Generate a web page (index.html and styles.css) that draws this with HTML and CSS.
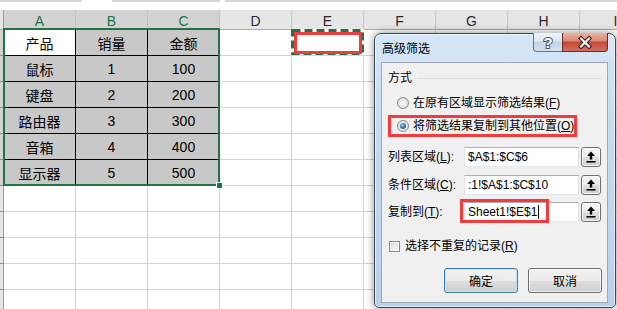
FILE: index.html
```html
<!DOCTYPE html>
<html lang="zh">
<head>
<meta charset="utf-8">
<title>高级筛选</title>
<link rel="stylesheet" href="styles.css">
</head>
<body>
<div class="app">
  <div class="topbar"><span class="seg s1"></span><span class="gap g1"></span><span class="seg s2"></span><span class="gap g2"></span><span class="seg s3"></span></div>
  <div class="sheet">
    <div class="corner"></div>
    <div class="ch sel">A</div><div class="ch sel">B</div><div class="ch sel">C</div><div class="ch">D</div><div class="ch">E</div><div class="ch">F</div><div class="ch">G</div><div class="ch">H</div><div class="ch">I</div>

    <div class="rh sel"></div>
    <div class="c t w">产品</div><div class="c t">销量</div><div class="c t">金额</div><div class="c"></div><div class="c"></div><div class="c"></div><div class="c"></div><div class="c"></div><div class="c"></div>

    <div class="rh sel"></div>
    <div class="c t">鼠标</div><div class="c t">1</div><div class="c t">100</div><div class="c"></div><div class="c"></div><div class="c"></div><div class="c"></div><div class="c"></div><div class="c"></div>

    <div class="rh sel"></div>
    <div class="c t">键盘</div><div class="c t">2</div><div class="c t">200</div><div class="c"></div><div class="c"></div><div class="c"></div><div class="c"></div><div class="c"></div><div class="c"></div>

    <div class="rh sel"></div>
    <div class="c t">路由器</div><div class="c t">3</div><div class="c t">300</div><div class="c"></div><div class="c"></div><div class="c"></div><div class="c"></div><div class="c"></div><div class="c"></div>

    <div class="rh sel"></div>
    <div class="c t">音箱</div><div class="c t">4</div><div class="c t">400</div><div class="c"></div><div class="c"></div><div class="c"></div><div class="c"></div><div class="c"></div><div class="c"></div>

    <div class="rh sel"></div>
    <div class="c t">显示器</div><div class="c t">5</div><div class="c t">500</div><div class="c"></div><div class="c"></div><div class="c"></div><div class="c"></div><div class="c"></div><div class="c"></div>

    <div class="rh"></div>
    <div class="c"></div><div class="c"></div><div class="c"></div><div class="c"></div><div class="c"></div><div class="c"></div><div class="c"></div><div class="c"></div><div class="c"></div>
    <div class="rh"></div>
    <div class="c"></div><div class="c"></div><div class="c"></div><div class="c"></div><div class="c"></div><div class="c"></div><div class="c"></div><div class="c"></div><div class="c"></div>
    <div class="rh"></div>
    <div class="c"></div><div class="c"></div><div class="c"></div><div class="c"></div><div class="c"></div><div class="c"></div><div class="c"></div><div class="c"></div><div class="c"></div>
    <div class="rh"></div>
    <div class="c"></div><div class="c"></div><div class="c"></div><div class="c"></div><div class="c"></div><div class="c"></div><div class="c"></div><div class="c"></div><div class="c"></div>
    <div class="rh"></div>
    <div class="c"></div><div class="c"></div><div class="c"></div><div class="c"></div><div class="c"></div><div class="c"></div><div class="c"></div><div class="c"></div><div class="c"></div>
  </div>

  <div class="selection"><span class="handle"></span></div>
  <svg class="ants" width="73" height="26" viewBox="0 0 73 26"><rect x="1.5" y="1.5" width="70" height="23" fill="none" stroke="#fff" stroke-width="3"/><rect x="1.5" y="1.5" width="70" height="23" fill="none" stroke="#217346" stroke-width="3" stroke-dasharray="8 4"/></svg>
  <div class="redbox"></div>

  <div class="dialog">
    <div class="titlebar">
      <span class="title">高级筛选</span>
      <div class="capbtns">
        <span class="cb help">?</span>
        <span class="cb close"><svg width="44" height="17" viewBox="0 0 44 17"><path d="M18 4.5 L26 12.5 M26 4.5 L18 12.5" stroke="#3d1712" stroke-width="4.2" stroke-linecap="square"/><path d="M18 4.5 L26 12.5 M26 4.5 L18 12.5" stroke="#fff" stroke-width="2.2" stroke-linecap="square"/></svg></span>
      </div>
    </div>
    <div class="panel">
      <div class="section"><span>方式</span><span class="rule"></span></div>
      <div class="opt first"><span class="radio"></span><span>在原有区域显示筛选结果(<u>F</u>)</span></div>
      <div class="optbox"><div class="opt"><span class="radio on"></span><span>将筛选结果复制到其他位置(<u>O</u>)</span></div></div>
      <div class="field f1"><span class="lbl">列表区域(<u>L</u>):</span><div class="input">$A$1:$C$6</div><span class="pick"><svg width="10" height="12" viewBox="0 0 10 12"><path d="M5 0.5 L9 5 L6.2 5 L6.2 8.5 L3.8 8.5 L3.8 5 L1 5 Z" fill="#000"/><rect x="0.5" y="10" width="9" height="1.6" fill="#000"/></svg></span></div>
      <div class="field f2"><span class="lbl">条件区域(<u>C</u>):</span><div class="input">:1!$A$1:$C$10</div><span class="pick"><svg width="10" height="12" viewBox="0 0 10 12"><path d="M5 0.5 L9 5 L6.2 5 L6.2 8.5 L3.8 8.5 L3.8 5 L1 5 Z" fill="#000"/><rect x="0.5" y="10" width="9" height="1.6" fill="#000"/></svg></span></div>
      <div class="field f3"><span class="lbl">复制到(<u>T</u>):</span><div class="input">Sheet1!$E$1<span class="caret"></span><span class="inmark"></span></div><span class="pick"><svg width="10" height="12" viewBox="0 0 10 12"><path d="M5 0.5 L9 5 L6.2 5 L6.2 8.5 L3.8 8.5 L3.8 5 L1 5 Z" fill="#000"/><rect x="0.5" y="10" width="9" height="1.6" fill="#000"/></svg></span></div>
      <div class="check"><span class="box"></span><span>选择不重复的记录(<u>R</u>)</span></div>
      <div class="buttons"><span class="btn default">确定</span><span class="btn">取消</span></div>
    </div>
  </div>
</div>
</body>
</html>
```

FILE: styles.css
```css
* { box-sizing: border-box; }
html, body { margin: 0; padding: 0; }
body {
  width: 617px; height: 309px; overflow: hidden; background: #fff;
  font-family: "Liberation Sans", "Noto Sans CJK SC", sans-serif;
}
.app { position: relative; width: 617px; height: 309px; overflow: hidden; }

.topbar { height: 10px; display: flex; align-items: flex-start; background: #fff; }
.topbar .seg { height: 2px; background: #d6d6d6; }
.s1 { width: 82px; }
.g1 { width: 30px; }
.s2 { width: 108px; }
.g2 { width: 5px; }
.s3 { flex: 1; }

.sheet {
  display: grid;
  grid-template-columns: 4px repeat(9, 72px);
  grid-template-rows: 20px repeat(11, 26px);
}
.corner { background: #e6e6e6; border-right: 1px solid #9e9e9e; border-bottom: 1px solid #ababab; }
.ch {
  background: #e6e6e6; border-right: 1px solid #c3c3c3; border-bottom: 1px solid #ababab;
  display: flex; align-items: center; justify-content: center;
  font-size: 14px; color: #2b2b2b; padding-top: 3px;
}
.ch.sel { background: #d3d3d3; color: #217346; }
.rh { background: #e6e6e6; border-right: 1px solid #9e9e9e; border-bottom: 1px solid #8c8c8c; }
.rh.sel { background: #d3d3d3; }
.c {
  border-right: 1px solid #d4d4d4; border-bottom: 1px solid #d4d4d4;
  display: flex; align-items: center; justify-content: center;
  font-size: 14px; color: #000; padding-top: 1px;
}
.c.t { background: #c8c8c8; border-right-color: #000; border-bottom-color: #000; }
.c.t.w { background: #fff; }

.selection {
  position: absolute; left: 3px; top: 28px; width: 217px; height: 158px;
  border: 2px solid #217346;
}
.handle {
  position: absolute; right: -5px; bottom: -5px; width: 7px; height: 7px;
  background: #217346; border: 1px solid #fff;
}
.ants { position: absolute; left: 291px; top: 29px; display: block; }
.redbox {
  position: absolute; left: 294px; top: 32px; width: 68px; height: 22px;
  border: 3px solid #f23c3c;
}

.dialog {
  position: absolute; left: 374px; top: 33px; width: 242px; height: 275px;
  border: 1px solid #3b4756; border-radius: 7px 7px 5px 5px;
  background: linear-gradient(180deg, #d6e6f6 0%, #c6dbf1 35%, #b8d0ea 100%);
  padding: 0 7px 4px 6px;
  display: flex; flex-direction: column;
  box-shadow: 0 0 9px rgba(0,0,0,.45), inset 0 0 0 1px rgba(255,255,255,.6);
  font-size: 12px; color: #000;
}
.titlebar { height: 28px; display: flex; justify-content: space-between; align-items: flex-start; }
.title { margin: 7px 0 0 1px; line-height: 16px; font-size: 12px; }
.capbtns { display: flex; margin-top: -1px; }
.cb { height: 19px; display: flex; align-items: center; justify-content: center; }
.help {
  width: 29px; border: 1px solid #66788c; border-right: none; border-top: none;
  border-radius: 0 0 0 4px;
  background: linear-gradient(180deg, #eef3f9 0%, #dbe5f0 45%, #c4d3e4 52%, #d3e1ef 100%);
  font-size: 15px; font-weight: bold; color: #fff;
  -webkit-text-stroke: 2px #4a5562; paint-order: stroke fill;
  line-height: 17px;
}
.close {
  width: 46px; border: 1px solid #6a2a22; border-top: none; border-radius: 0 0 4px 0;
  background: linear-gradient(180deg, #eab0a3 0%, #d98b79 42%, #c3483a 52%, #d2715f 100%);
}
.close svg { display: block; }

.panel {
  flex: 1; background: #f0f0f0; border: 1px solid #9aaabb;
  display: flex; flex-direction: column;
}
.section { margin: 7px 5px 0 6px; height: 16px; display: flex; align-items: center; gap: 5px; line-height: 16px; }
.rule { flex: 1; height: 1px; background: #d5dde6; }

.opt { height: 16px; display: flex; align-items: center; gap: 4px; line-height: 16px; white-space: nowrap; }
.opt.first { margin-top: 9px; padding-left: 15px; }
.optbox { margin: 4px 0 0 6px; width: 189px; height: 22px; border: 3px solid #f23c3c; }
.optbox .opt { padding-left: 6px; }
.radio {
  flex: none; position: relative; width: 12px; height: 12px; border-radius: 50%;
  border: 1px solid #8b8c8c;
  background: radial-gradient(circle at 50% 50%, #fafafa 0, #e6e6e6 55%, #cfcfcf 100%);
}
.radio.on::after {
  content: ""; position: absolute; left: 2px; top: 2px; width: 6px; height: 6px; border-radius: 50%;
  background: radial-gradient(circle at 40% 35%, #a6cde9 0, #3f7bab 45%, #1a456c 100%);
}

.field { height: 20px; display: flex; align-items: center; padding-left: 6px; }
.f1 { margin-top: 10px; }
.f2 { margin-top: 8px; }
.f3 { margin-top: 7px; }
.lbl { width: 76px; line-height: 16px; white-space: nowrap; }
.input {
  position: relative; width: 115px; height: 20px; background: #fff;
  border: 1px solid #abadb3; border-left-color: #e2e3ea; border-right-color: #dbdfe6; border-bottom-color: #e3e9ef;
  padding-left: 3px; display: flex; align-items: center; font-size: 12px; white-space: nowrap;
}
.caret { width: 1px; height: 14px; background: #000; margin-left: 1px; }
.inmark {
  position: absolute; left: -5px; top: -4px; width: 89px; height: 24px;
  border: 3px solid #f23c3c;
}
.pick {
  width: 20px; height: 20px; margin-left: 2px; border: 1px solid #707070; border-radius: 3px;
  background: linear-gradient(180deg, #f4f4f4 0%, #ececec 50%, #dedede 52%, #d0d0d0 100%);
  box-shadow: inset 0 0 0 1px rgba(255,255,255,.75);
  display: flex; align-items: center; justify-content: center;
}
.pick svg { display: block; }

.check { margin-top: 16px; height: 16px; display: flex; align-items: center; gap: 5px; padding-left: 7px; line-height: 16px; }
.box {
  width: 11px; height: 11px; border: 1px solid #8b8c8c;
  background: linear-gradient(135deg, #d2d2d2 0%, #eeeeee 60%, #f8f8f8 100%);
  box-shadow: inset 0 0 0 1px #f5f5f5;
}

.buttons { margin-top: 14px; display: flex; justify-content: flex-end; gap: 10px; padding-right: 5px; }
.btn {
  width: 74px; height: 25px; border: 1px solid #707070; border-radius: 3px;
  background: linear-gradient(180deg, #f2f2f2 0%, #ebebeb 50%, #dddddd 52%, #cfcfcf 100%);
  box-shadow: inset 0 0 0 1px rgba(255,255,255,.75);
  display: flex; align-items: center; justify-content: center; font-size: 12px;
}
.btn.default { border-color: #3c7fb1; box-shadow: inset 0 0 0 1px #c2e4f6; }
u { text-decoration: underline; text-underline-offset: 1px; }
```
